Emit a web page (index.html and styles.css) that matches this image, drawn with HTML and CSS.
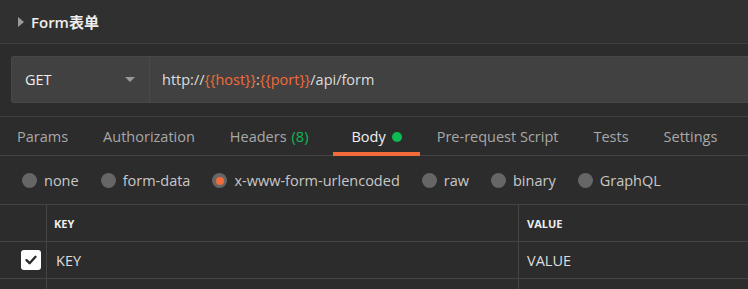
FILE: index.html
```html
<!DOCTYPE html>
<html lang="en">
<head>
    <meta charset="UTF-8">
    <title>Form表单</title>
    <link rel="stylesheet" href="styles.css">
</head>
<body>
    <div class="header">
        <span class="caret"></span>
        <span class="title">Form表单</span>
    </div>

    <div class="url-wrap">
        <div class="url-bar">
            <div class="method">
                <span>GET</span>
                <span class="method-arrow"></span>
            </div>
            <div class="url">http://<span class="var">{{host}}</span>:<span class="var">{{port}}</span>/api/form</div>
        </div>
    </div>

    <div class="tabs">
        <div class="tab">Params</div>
        <div class="tab">Authorization</div>
        <div class="tab headers">Headers <span class="count">(8)</span></div>
        <div class="tab active">Body <span class="dot"></span></div>
        <div class="tab">Pre-request Script</div>
        <div class="tab">Tests</div>
        <div class="tab">Settings</div>
    </div>

    <div class="body-types">
        <label class="radio"><span class="circle"></span>none</label>
        <label class="radio"><span class="circle"></span>form-data</label>
        <label class="radio"><span class="circle checked"></span>x-www-form-urlencoded</label>
        <label class="radio"><span class="circle"></span>raw</label>
        <label class="radio"><span class="circle"></span>binary</label>
        <label class="radio"><span class="circle"></span>GraphQL</label>
    </div>

    <div class="table">
        <div class="row head">
            <div class="cell check"></div>
            <div class="cell key">KEY</div>
            <div class="cell value">VALUE</div>
        </div>
        <div class="row">
            <div class="cell check">
                <span class="checkbox">
                    <svg width="14" height="14" viewBox="0 0 14 14"><path d="M2.5 7.2 L5.6 10.2 L11.5 3.8" fill="none" stroke="#2c2c2c" stroke-width="2.4" stroke-linecap="round" stroke-linejoin="round"/></svg>
                </span>
            </div>
            <div class="cell key">KEY</div>
            <div class="cell value">VALUE</div>
        </div>
        <div class="row">
            <div class="cell check"></div>
            <div class="cell key"></div>
            <div class="cell value"></div>
        </div>
    </div>
</body>
</html>
```

FILE: styles.css
```css
body {
    margin: 0;
    height: 289px;
    overflow: hidden;
    background-color: #2c2c2c;
    font-family: "Open Sans", "Noto Sans CJK SC", sans-serif;
    color: #ddd;
}
.header {
    height: 43px;
    display: flex;
    align-items: center;
    padding-left: 18px;
    background-color: #303030;
    border-bottom: 1px solid #3f3f3f;
}
.caret {
    width: 0;
    height: 0;
    border-top: 5px solid transparent;
    border-bottom: 5px solid transparent;
    border-left: 6px solid #9a9a9a;
    margin-right: 7px;
}
.title {
    font-size: 15px;
    font-weight: 600;
    color: #eee;
}
.url-wrap {
    padding: 12px 0 13px 11px;
    border-bottom: 1px solid #3f3f3f;
}
.url-bar {
    display: flex;
    height: 45px;
    background-color: #414141;
    border: 1px solid #474747;
    border-right: none;
    border-radius: 3px 0 0 3px;
}
.method {
    width: 138px;
    display: flex;
    align-items: center;
    justify-content: space-between;
    padding: 0 14px 0 13px;
    box-sizing: border-box;
    border-right: 1px solid #4a4a4a;
    font-size: 14.5px;
    color: #eee;
}
.method-arrow {
    width: 0;
    height: 0;
    border-left: 5px solid transparent;
    border-right: 5px solid transparent;
    border-top: 5px solid #9a9a9a;
}
.url {
    display: flex;
    align-items: center;
    padding-left: 12px;
    font-size: 14.5px;
    color: #ddd;
}
.var {
    color: #f26b3a;
}
.tabs {
    display: flex;
    height: 38px;
    border-bottom: 1px solid #444;
}
.tab {
    display: flex;
    align-items: center;
    padding: 4px 18px 0 17px;
    font-size: 14.5px;
    color: #a8a8a8;
    border-bottom: 4px solid transparent;
    margin-bottom: -1px;
}
.tab.headers {
    margin-right: 7px;
}
.tab .count {
    color: #0cbb52;
    margin-left: 5px;
}
.tab.active {
    color: #f0f0f0;
    border-bottom-color: #f26b3a;
    padding-left: 18px;
}
.dot {
    width: 10px;
    height: 10px;
    border-radius: 50%;
    background-color: #0cbb52;
    margin-left: 6px;
}
.body-types {
    display: flex;
    align-items: center;
    height: 48px;
    padding: 1px 0 0 22px;
    box-sizing: border-box;
}
.radio {
    display: flex;
    align-items: center;
    font-size: 14.5px;
    color: #c8c8c8;
    margin-right: 22px;
}
.circle {
    width: 15px;
    height: 15px;
    border-radius: 50%;
    background-color: #666;
    margin-right: 7px;
    display: flex;
    align-items: center;
    justify-content: center;
}
.circle.checked::after {
    content: "";
    width: 8px;
    height: 8px;
    border-radius: 50%;
    background-color: #f26b3a;
}
.table {
    border-top: 1px solid #444;
}
.row {
    display: flex;
    height: 36px;
    border-bottom: 1px solid #444;
}
.cell {
    display: flex;
    align-items: center;
    font-size: 14.5px;
    color: #ddd;
}
.cell.check {
    width: 47px;
    justify-content: flex-end;
    padding-right: 5px;
    box-sizing: border-box;
    border-right: 1px solid #444;
}
.cell.key {
    width: 472px;
    padding-left: 9px;
    box-sizing: border-box;
    border-right: 1px solid #444;
}
.cell.value {
    flex: 1;
    padding-left: 8px;
}
.row.head .cell {
    font-size: 11px;
    font-weight: 700;
    color: #eee;
    padding-top: 1px;
}
.row.head .cell.key {
    padding-left: 7px;
}
.checkbox {
    width: 20px;
    height: 20px;
    border-radius: 3px;
    background-color: #fff;
    display: flex;
    align-items: center;
    justify-content: center;
}
```
